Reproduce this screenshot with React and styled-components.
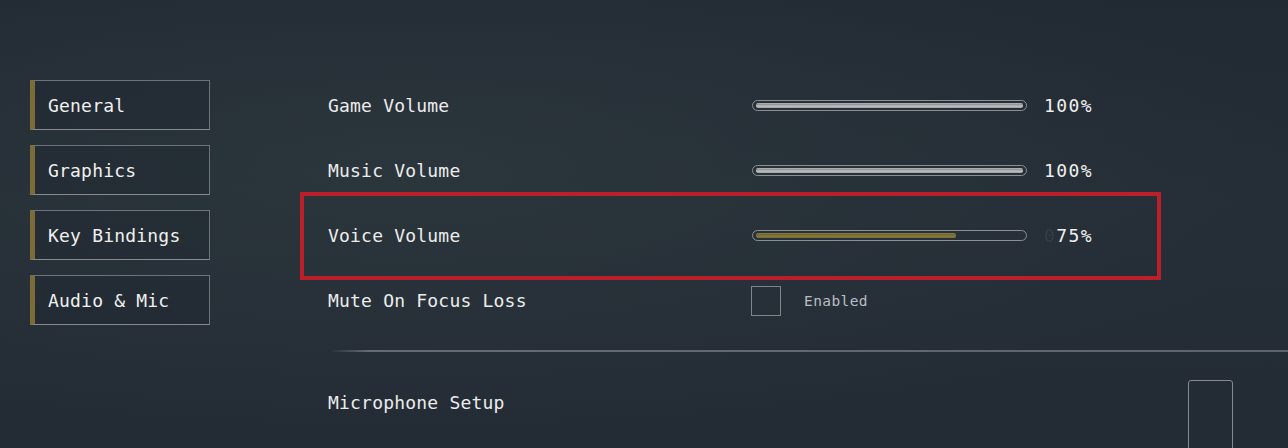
import styled, { createGlobalStyle } from "styled-components";

const GlobalStyle = createGlobalStyle`
  html, body {
    margin: 0;
    padding: 0;
    background: #232b34;
  }
  *, *::before, *::after {
    box-sizing: border-box;
  }
`;

const tabs = ["General", "Graphics", "Key Bindings", "Audio & Mic"];

const sliders = [
  { label: "Game Volume", value: 100 },
  { label: "Music Volume", value: 100 },
  { label: "Voice Volume", value: 75, active: true },
];

const App = () => {
  return (
    <>
      <GlobalStyle />
      <Screen>
        <Sidebar>
          {tabs.map((tab) => (
            <TabButton key={tab}>{tab}</TabButton>
          ))}
        </Sidebar>
        <Content>
          {sliders.map((s) => (
            <Row key={s.label} $highlight={s.active}>
              <Label>{s.label}</Label>
              <Track>
                <Fill $active={s.active} style={{ width: `${s.value}%` }} />
              </Track>
              <Percent>
                {s.value < 100 && <Ghost>0</Ghost>}
                {s.value}%
              </Percent>
            </Row>
          ))}
          <Row>
            <Label>Mute On Focus Loss</Label>
            <Checkbox />
            <CheckText>Enabled</CheckText>
          </Row>
          <Divider />
          <MicRow>
            <MicLabel>Microphone Setup</MicLabel>
            <MicBox />
          </MicRow>
        </Content>
      </Screen>
    </>
  );
};

const Screen = styled.div`
  width: 1288px;
  height: 448px;
  overflow: hidden;
  display: flex;
  font-family: "DejaVu Sans Mono", "Liberation Mono", monospace;
  background:
    radial-gradient(ellipse 70% 60% at 32% 38%, #2b353c 0%, rgba(43, 53, 60, 0) 100%),
    linear-gradient(180deg, #212932 0%, #252e36 45%, #232b34 100%);
`;

const Sidebar = styled.div`
  width: 210px;
  padding: 80px 0 0 30px;
  display: flex;
  flex-direction: column;
  gap: 15px;
  flex-shrink: 0;
`;

const TabButton = styled.div`
  width: 180px;
  height: 50px;
  flex-shrink: 0;
  display: flex;
  align-items: center;
  padding-left: 13px;
  border: 1px solid #6e7379;
  border-bottom-color: #878b90;
  border-left: 5px solid #7b6c38;
  background: rgba(30, 37, 45, 0.35);
  color: #f0f0f0;
  font-size: 18px;
  letter-spacing: 0.2px;
`;

const Content = styled.div`
  flex: 1;
  padding: 73px 0 0 118px;
  display: flex;
  flex-direction: column;
`;

const Row = styled.div`
  position: relative;
  height: 65px;
  flex-shrink: 0;
  display: flex;
  align-items: center;

  &::after {
    content: "";
    display: ${(p) => (p.$highlight ? "block" : "none")};
    position: absolute;
    left: -28px;
    top: -11px;
    width: 861px;
    height: 88px;
    border: 4px solid #bb1f29;
    pointer-events: none;
  }
`;

const Label = styled.div`
  width: 424px;
  color: #ececec;
  font-size: 18px;
  letter-spacing: 0.2px;
`;

const Track = styled.div`
  position: relative;
  width: 275px;
  height: 11px;
  border: 1px solid #8c9095;
  border-radius: 6px;
  padding: 2px 3px;
`;

const Fill = styled.div`
  height: 5px;
  border-radius: 2px;
  background: ${(p) =>
    p.$active
      ? "linear-gradient(180deg, #8e7f3e 0%, #6f6431 35%, #8a7b3c 60%, #776a34 100%)"
      : "linear-gradient(180deg, #b4b6b8 0%, #8f9294 35%, #c2c4c6 60%, #9a9c9e 100%)"};
`;

const Percent = styled.div`
  margin-left: 17px;
  color: #f0f0f0;
  font-size: 18px;
  letter-spacing: 1.4px;
`;

const Ghost = styled.span`
  color: #343c45;
`;

const Checkbox = styled.div`
  width: 30px;
  height: 30px;
  margin-left: -1px;
  border: 1px solid #80858a;
`;

const CheckText = styled.div`
  margin-left: 23px;
  color: #b9bdc1;
  font-size: 14.5px;
  letter-spacing: 0.4px;
`;

const Divider = styled.div`
  height: 2px;
  flex-shrink: 0;
  margin: 17px 0 0 2px;
  background: linear-gradient(90deg, rgba(110, 115, 120, 0) 0%, #666b71 4%, #5f646a 100%);
`;

const MicRow = styled.div`
  display: flex;
  justify-content: space-between;
  align-items: flex-start;
  flex-shrink: 0;
  padding: 28px 55px 0 0;
`;

const MicLabel = styled.div`
  margin-top: 12px;
  color: #ececec;
  font-size: 18px;
  letter-spacing: 0.2px;
`;

const MicBox = styled.div`
  width: 45px;
  height: 90px;
  border: 1px solid #868a8f;
  border-radius: 3px 3px 0 0;
`;

export default App;
